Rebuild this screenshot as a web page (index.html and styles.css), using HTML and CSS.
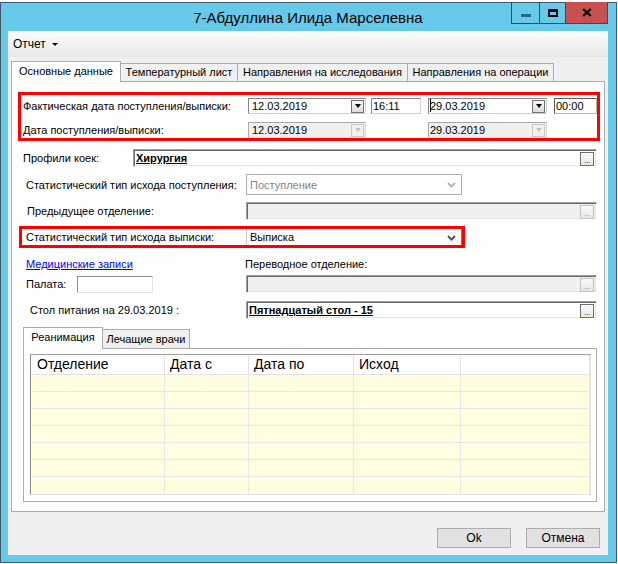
FILE: index.html
```html
<!DOCTYPE html>
<html lang="ru">
<head>
<meta charset="utf-8">
<title>7-Абдуллина Илида Марселевна</title>
<link rel="stylesheet" href="styles.css">
</head>
<body>
<div class="window">
  <div class="titlebar">
    <div class="title">7-Абдуллина Илида Марселевна</div>
    <div class="caption-btns">
      <div class="cb cb-min"><span class="min-glyph"></span></div>
      <div class="cb cb-max"><span class="max-glyph"></span></div>
      <div class="cb cb-close"><svg width="10" height="9" viewBox="0 0 10 9"><path d="M1.2 1 L8.8 8 M8.8 1 L1.2 8" stroke="#000" stroke-width="2.2" fill="none"/></svg></div>
    </div>
  </div>
  <div class="client">
    <div class="menubar"><span class="menu-item">Отчет</span><span class="menu-arrow"></span></div>
    <div class="tabs">
      <div class="tabstrip">
        <div class="tab sel tw1">Основные данные</div>
        <div class="tab tw2">Температурный лист</div>
        <div class="tab tw3">Направления на исследования</div>
        <div class="tab tw4">Направления на операции</div>
      </div>
      <div class="tabpanel">
        <div class="redbox rb1">
          <div class="drow">
            <div class="lbl lbl-a">Фактическая дата поступления/выписки:</div>
            <div class="dtp dw1"><span class="dtxt">12.03.2019</span><span class="dd"><span class="tri"></span></span></div>
            <div class="tb tw-a">16:11</div>
            <div class="dtp dw2 gap7"><span class="dtxt tight"><span class="caret"></span>29.03.2019</span><span class="dd"><span class="tri"></span></span></div>
            <div class="tb tw-b gap7 focus">00:00</div>
          </div>
          <div class="drow drow2">
            <div class="lbl lbl-a">Дата поступления/выписки:</div>
            <div class="dtp dw1 dis"><span class="dtxt">12.03.2019</span><span class="dd"><span class="tri"></span></span></div>
            <div class="dtp dw2 dis gap62"><span class="dtxt tight">29.03.2019</span><span class="dd"><span class="tri"></span></span></div>
          </div>
        </div>

        <div class="frow row-b">
          <div class="lbl lbl-b">Профили коек:</div>
          <div class="fld fw-b"><span class="ftxt bold">Хирургия</span><span class="ell on">...</span></div>
        </div>

        <div class="frow row-c">
          <div class="lbl lbl-c">Статистический тип исхода поступления:</div>
          <div class="cmb dis"><span class="ctxt">Поступление</span><svg class="chev" width="9" height="6" viewBox="0 0 9 6"><polyline points="1,1 4.5,4.6 8,1" fill="none" stroke="#a9a9a9" stroke-width="1.7"/></svg></div>
        </div>

        <div class="frow row-d">
          <div class="lbl lbl-d">Предыдущее отделение:</div>
          <div class="fld fw-w dis"><span class="ftxt"></span><span class="ell">...</span></div>
        </div>

        <div class="redbox rb2">
          <div class="lbl lbl-e">Статистический тип исхода выписки:</div>
          <div class="cmb cmb-in"><span class="ctxt">Выписка</span><svg class="chev" width="9" height="6" viewBox="0 0 9 6"><polyline points="1,1 4.5,4.6 8,1" fill="none" stroke="#4a4a4a" stroke-width="1.8"/></svg></div>
        </div>

        <div class="frow row-f">
          <div class="lbl lbl-f"><span class="link">Медицинские записи</span></div>
          <div class="lbl">Переводное отделение:</div>
        </div>

        <div class="frow row-g">
          <div class="lbl lbl-g">Палата:</div>
          <div class="palata"></div>
          <div class="fld fw-w dis gap93"><span class="ftxt"></span><span class="ell">...</span></div>
        </div>

        <div class="frow row-h">
          <div class="lbl lbl-h">Стол питания на 29.03.2019 :</div>
          <div class="fld fw-w"><span class="ftxt bold">Пятнадцатый стол - 15</span><span class="ell on">...</span></div>
        </div>

        <div class="itabs">
          <div class="itabstrip">
            <div class="itab sel iw1">Реанимация</div>
            <div class="itab iw2">Лечащие врачи</div>
          </div>
          <div class="ipanel">
            <div class="grid">
              <div class="grow ghead">
                <div class="gc c1">Отделение</div><div class="gc">Дата с</div><div class="gc">Дата по</div><div class="gc">Исход</div><div class="gc"></div>
              </div>
              <div class="grow gdata"><div class="gc"></div><div class="gc"></div><div class="gc"></div><div class="gc"></div><div class="gc"></div></div>
              <div class="grow gdata"><div class="gc"></div><div class="gc"></div><div class="gc"></div><div class="gc"></div><div class="gc"></div></div>
              <div class="grow gdata"><div class="gc"></div><div class="gc"></div><div class="gc"></div><div class="gc"></div><div class="gc"></div></div>
              <div class="grow gdata"><div class="gc"></div><div class="gc"></div><div class="gc"></div><div class="gc"></div><div class="gc"></div></div>
              <div class="grow gdata"><div class="gc"></div><div class="gc"></div><div class="gc"></div><div class="gc"></div><div class="gc"></div></div>
              <div class="grow gdata"><div class="gc"></div><div class="gc"></div><div class="gc"></div><div class="gc"></div><div class="gc"></div></div>
              <div class="grow gdata last"><div class="gc"></div><div class="gc"></div><div class="gc"></div><div class="gc"></div><div class="gc"></div></div>
            </div>
          </div>
        </div>
      </div>
    </div>
    <div class="btns">
      <div class="btn">Ok</div>
      <div class="btn">Отмена</div>
    </div>
  </div>
</div>
</body>
</html>
```
FILE: styles.css
```css
* { box-sizing: border-box; }
html, body { margin: 0; padding: 0; }
body {
  width: 618px; height: 564px; overflow: hidden;
  background: #ffffff;
  font-family: "Liberation Sans", Arial, sans-serif;
  font-size: 11px; color: #000;
}
.window {
  position: relative;
  margin-top: 2px;
  width: 617px; height: 561px;
  border: 1px solid #3f5866;
  background: #66c9ea;
  padding: 0 8px 7px 7px;
}
.titlebar { position: relative; height: 28px; }
.title {
  text-align: center; font-size: 15px; line-height: 28px; padding-top: 1px;
  color: #000;
}
.caption-btns {
  position: absolute; top: -1px; right: 0;
  display: flex; height: 22px;
  border: 1px solid #3b4a52; border-top: none;
}
.cb { display: flex; align-items: center; justify-content: center; height: 100%; }
.cb-min { width: 28px; border-right: 1px solid #3b4a52; }
.cb-max { width: 26px; border-right: 1px solid #3b4a52; }
.cb-close { width: 41px; background: #c75050; }
.min-glyph { display: block; width: 10px; height: 3px; background: #2d6a88; margin-top: 6px; }
.max-glyph { display: block; width: 10px; height: 8px; border: 2px solid #000; border-top-width: 3px; margin-top: 1px; }

.client {
  height: 524px; background: #f0f0f0;
  display: flex; flex-direction: column;
}
.menubar {
  height: 26px; flex: none;
  background: linear-gradient(#fdfdfd, #e6e8ea);
  display: flex; align-items: center; padding-left: 5px;
  font-size: 12px;
}
.menu-arrow {
  display: inline-block; width: 0; height: 0; margin-left: 6px; margin-top: 1px;
  border-left: 3px solid transparent; border-right: 3px solid transparent; border-top: 3px solid #000;
}

.tabs { margin: 4px 3px 0 3px; flex: none; }
.tabstrip { display: flex; align-items: flex-end; height: 20px; position: relative; z-index: 2; }
.tab {
  height: 18px; line-height: 16px; text-align: center;
  border: 1px solid #acacac; border-bottom: none;
  background: #f0f0f0; margin-left: -1px; white-space: nowrap;
}
.tab.sel {
  height: 21px; line-height: 19px; margin-left: 0; margin-bottom: -1px;
  background: #fff; position: relative; z-index: 3; padding-bottom: 2px;
}
.tw1 { width: 110px; }
.tw2 { width: 118px; }
.tw3 { width: 171px; }
.tw4 { width: 147px; }
.tabpanel {
  height: 431px; background: #fff; border: 1px solid #acacac;
}

.lbl { flex: none; white-space: nowrap; }
.redbox { border: 3px solid #ff0000; }
.rb1 { margin: 10px 0 0 6px; width: 582px; height: 49px; padding-top: 3px; }
.drow { display: flex; align-items: center; height: 16px; }
.drow2 { margin-top: 8px; }
.lbl-a { width: 227px; padding-left: 2px; }
.dtp {
  height: 16px; flex: none;
  border: 1px solid; border-color: #868686 #cfcfcf #cfcfcf #868686;
  background: #fff; display: flex; align-items: center;
  padding: 0 1px 0 3px;
}
.dtxt { flex: 1; line-height: 14px; }
.dtxt.tight { margin-left: -2px; }
.caret { display: inline-block; width: 1px; height: 13px; background: #000; vertical-align: -2px; margin-right: -1px; }
.dw1 { width: 118px; }
.dw2 { width: 119px; }
.gap7 { margin-left: 7px; }
.gap62 { margin-left: 62px; }
.dd {
  width: 13px; height: 13px; flex: none;
  border: 1px solid #707070; background: linear-gradient(#f7f7f7, #dcdcdc);
  display: flex; align-items: center; justify-content: center;
}
.tri { width: 0; height: 0; border-left: 3.5px solid transparent; border-right: 3.5px solid transparent; border-top: 4px solid #000; }
.dtp.dis { background: #f0f0f0; border-color: #a9a9a9 #d8d8d8 #d8d8d8 #a9a9a9; }
.dtp.dis .dd { border-color: #c9c9c9; background: #f0f0f0; }
.dtp.dis .tri { border-top-color: #c3c3c3; }
.tb {
  height: 16px; flex: none; background: #fff;
  border: 1px solid; border-color: #868686 #cfcfcf #cfcfcf #868686;
  padding-left: 1px; line-height: 14px;
}
.tw-a { width: 50px; margin-left: 5px; }
.tw-b { width: 43px; }
.tb.focus { border-color: #5a5a5a #b8b8b8 #b8b8b8 #5a5a5a; }

.frow { display: flex; align-items: center; }
.row-b { margin-top: 8px; height: 18px; }
.row-c { margin-top: 7px; height: 21px; }
.row-d { margin-top: 7px; height: 18px; }
.row-f { margin-top: 9px; height: 13px; }
.row-g { margin-top: 5px; height: 18px; }
.row-h { margin-top: 8px; height: 18px; }
.lbl-b { width: 121px; padding-left: 11px; }
.lbl-c { width: 234px; padding-left: 14px; }
.lbl-d { width: 234px; padding-left: 15px; }
.lbl-f { width: 233px; padding-left: 14px; }
.lbl-g { width: 65px; padding-left: 14px; }
.lbl-h { width: 234px; padding-left: 18px; }
.link { color: #0000ff; text-decoration: underline; }

.fld {
  height: 18px; flex: none; background: #fff;
  border: 1px solid; border-color: #a0a0a0 #ffffff #ffffff #a0a0a0;
  box-shadow: inset 1px 1px 0 #696969, inset -1px -1px 0 #e3e3e3;
  display: flex; align-items: center; padding: 0 2px 0 1px;
}
.fld.dis { background: #f0f0f0; }
.fw-b { width: 464px; }
.fw-w { width: 351px; }
.gap93 { margin-left: 93px; }
.ftxt { flex: 1; padding-left: 1px; line-height: 14px; white-space: nowrap; }
.ftxt.bold { font-weight: bold; text-decoration: underline; }
.ell {
  width: 14px; height: 14px; flex: none; margin-top: 1px;
  border: 1px solid #c4c4c4; background: linear-gradient(#fafafa, #e6e6e6);
  font-size: 9px; line-height: 14px; text-align: center; color: #a8a8a8; letter-spacing: -0.5px;
}
.ell.on { border-color: #707070; color: #444; }

.cmb {
  width: 216px; height: 21px; flex: none;
  border: 1px solid #acacac; background: #fff;
  display: flex; align-items: center; padding: 0 5px 0 3px;
}
.cmb .ctxt { flex: 1; }
.cmb.dis .ctxt { color: #838383; }
.chev { flex: none; margin-top: 1px; }
.rb2 { margin: 6px 0 0 7px; width: 446px; height: 22px; display: flex; align-items: center; }
.lbl-e { width: 224px; padding-left: 4px; }
.cmb-in { height: 16px; border-top: none; border-bottom: none; border-left-color: #c8c8c8; border-right-color: #7a7a7a; }

.palata {
  width: 76px; height: 17px; flex: none; background: #fff;
  border: 1px solid; border-color: #8e8e8e #e3e3e3 #e3e3e3 #8e8e8e;
}

.itabs { margin: 8px 0 0 11px; width: 574px; }
.itabstrip { display: flex; align-items: flex-end; height: 21px; position: relative; z-index: 2; }
.itab {
  height: 19px; line-height: 18px; text-align: center;
  border: 1px solid #acacac; border-bottom: none;
  background: #f0f0f0; margin-left: -1px; white-space: nowrap;
}
.itab.sel { height: 22px; line-height: 19px; margin-left: 0; margin-bottom: -1px; background: #fff; padding-bottom: 2px; z-index: 3; position: relative; }
.iw1 { width: 80px; }
.iw2 { width: 88px; }
.ipanel {
  height: 154px; background: #fff; border: 1px solid #acacac;
  padding: 5px 5px 0 6px;
}
.grid {
  width: 561px; height: 141px;
  border: 1px solid; border-color: #a0a0a0 #e3e3e3 #e3e3e3 #8a8a8a;
  background: #fffee1; overflow: hidden;
}
.grow { display: grid; grid-template-columns: 134px 84px 105px 107px 1fr; }
.ghead { height: 20px; background: #fff; font-size: 14px; }
.ghead .gc { border-right: 1px solid #e3e3e3; border-bottom: 1px solid #e3e3e3; padding-left: 5px; line-height: 19px; white-space: nowrap; }
.ghead .gc.c1 { padding-left: 6px; }
.gdata { height: 17px; background: #fffee1; }
.gdata .gc { border-right: 1px solid #e8e8e8; border-bottom: 1px solid #e8e8e8; }
.gdata.last .gc { border-bottom: none; }

.btns { display: flex; justify-content: flex-end; gap: 15px; margin-top: 16px; padding-right: 8px; }
.btn {
  width: 74px; height: 20px; border: 1px solid #adadad; background: #e1e1e1;
  font-size: 12px; line-height: 18px; text-align: center;
}
```
